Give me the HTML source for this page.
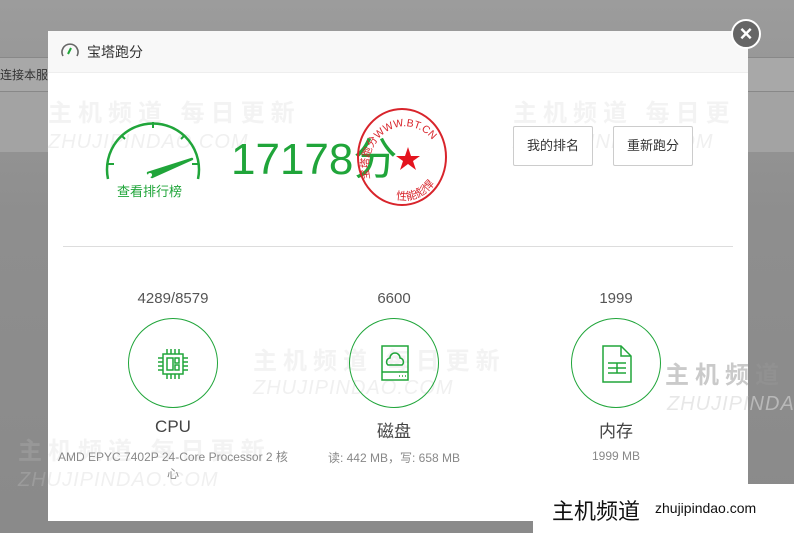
<!DOCTYPE html>
<html><head><meta charset="utf-8"><style>
*{margin:0;padding:0;box-sizing:border-box}
body{width:794px;height:533px;overflow:hidden;position:relative;font-family:"Liberation Sans","Noto Sans CJK SC",sans-serif;background:linear-gradient(#9c9c9c,#8e8e8e 40%,#8a8a8a);}
.abs{position:absolute}
.modal{left:48px;top:31px;width:700px;height:490px;background:#fff}
.hdr{left:0;top:0;width:700px;height:42px;background:#f8f8f8;border-bottom:1px solid #eee}
.btn{border:1px solid #ccc;border-radius:2px;width:80px;height:40px;font-size:13px;color:#333;text-align:center;line-height:38px;background:#fff}
.c{text-align:center;width:200px}
.circ{width:90px;height:90px;border:1.5px solid #20a53a;border-radius:50%}
.wm{color:rgba(200,200,200,.22);font-weight:bold;font-size:24px;letter-spacing:6px}
.wm2{color:rgba(200,200,200,.28);font-style:italic;font-size:20px;letter-spacing:1px}
</style></head><body>
<div class="abs" style="left:0;top:57px;width:48px;height:35px;background:#a8a8a8;border-top:1px solid #888;border-bottom:1px solid #888"></div>
<div class="abs" style="left:0;top:66px;font-size:12px;color:#333">连接本服</div>
<div class="abs" style="left:0;top:92px;width:48px;height:60px;background:#a3a3a3"></div>
<div class="abs" style="left:748px;top:57px;width:46px;height:35px;background:#a8a8a8;border-top:1px solid #888;border-bottom:1px solid #888"></div>
<div class="abs" style="left:748px;top:92px;width:46px;height:60px;background:#a3a3a3"></div>
<div class="abs modal">
 <div class="abs hdr"></div>
 <svg class="abs" style="left:11px;top:10px" width="22" height="18" viewBox="0 0 22 18"><path d="M4 15 A8 8 0 1 1 18 15" fill="none" stroke="#666" stroke-width="1.6"/><path d="M9 13 L12 7" stroke="#20a53a" stroke-width="2"/></svg>
 <div class="abs" style="left:39px;top:11px;font-size:14px;color:#333">宝塔跑分</div>
 <div class="abs wm" style="left:0;top:62px">主机频道 每日更新</div>
 <div class="abs wm2" style="left:0;top:100px">ZHUJIPINDAO.COM</div>
 <div class="abs wm" style="left:465px;top:62px">主机频道 每日更新</div>
 <div class="abs wm2" style="left:465px;top:100px">ZHUJIPINDAO.COM</div>
 <svg class="abs" style="left:56px;top:88px" width="98" height="64" viewBox="0 0 98 64"><path d="M4 60 A46 46 0 1 1 94 60" fill="none" stroke="#20a53a" stroke-width="2.5"/><path d="M49 3 V9 M17 16 L21 20 M81 16 L77 20 M4 45 H10 M94 45 H88" stroke="#20a53a" stroke-width="2"/><path d="M44 54 L88 40 L48 58 Z" fill="#20a53a" stroke="#20a53a" stroke-width="2.5" stroke-linejoin="round"/><circle cx="46" cy="56" r="2" fill="#fff"/></svg>
 <div class="abs" style="left:69px;top:150px;font-size:13px;color:#20a53a">查看排行榜</div>
 <div class="abs" style="left:183px;top:92px;font-size:44px;color:#20a53a">17178分</div>
 <svg class="abs" style="left:308px;top:76px" width="92" height="100" viewBox="0 0 92 100"><defs><path id="tp" d="M14 72 A36 40 0 1 1 84 48"/><path id="bp" d="M40 92 A38 42 0 0 0 86 58"/></defs><ellipse cx="46" cy="50" rx="44" ry="48" fill="none" stroke="#d8242b" stroke-width="2"/><path d="M52 40 L55 49 L64 49 L57 54 L60 63 L52 57 L44 63 L47 54 L40 49 L49 49 Z" fill="#e4141e"/><text font-size="10.5" fill="#d8242b"><textPath href="#tp">宝塔跑分WWW.BT.CN</textPath></text><text font-size="11" fill="#d8242b"><textPath href="#bp">性能彪悍</textPath></text></svg>
 <div class="abs btn" style="left:465px;top:95px">我的排名</div>
 <div class="abs btn" style="left:565px;top:95px">重新跑分</div>
 <div class="abs" style="left:15px;top:215px;width:670px;height:1px;background:#ddd"></div>
 <div class="abs wm" style="left:205px;top:310px">主机频道 每日更新</div>
 <div class="abs wm2" style="left:205px;top:346px">ZHUJIPINDAO.COM</div>
 <div class="abs wm" style="left:-30px;top:400px">主机频道 每日更新</div>
 <div class="abs wm2" style="left:-30px;top:438px">ZHUJIPINDAO.COM</div>
 <div class="abs c" style="left:25px;top:259px;font-size:15px;color:#555">4289/8579</div>
 <div class="abs circ" style="left:80px;top:287px"></div>
 <svg class="abs" style="left:107px;top:315px" width="36" height="36" viewBox="0 0 36 36" fill="none" stroke="#20a53a" stroke-width="1.5"><rect x="8" y="8" width="20" height="20"/><rect x="12" y="12" width="6" height="12"/><rect x="20" y="12" width="4" height="5"/><rect x="20" y="19" width="4" height="5"/><path d="M12 3v5M16 3v5M20 3v5M24 3v5M12 28v5M16 28v5M20 28v5M24 28v5M3 12h5M3 16h5M3 20h5M3 24h5M28 12h5M28 16h5M28 20h5M28 24h5"/></svg>
 <div class="abs c" style="left:25px;top:386px;font-size:17px;color:#444">CPU</div>
 <div class="abs c" style="left:5px;top:418px;width:240px;font-size:12px;color:#888;line-height:17px">AMD EPYC 7402P 24-Core Processor 2 核心</div>
 <div class="abs c" style="left:246px;top:259px;font-size:15px;color:#555">6600</div>
 <div class="abs circ" style="left:301px;top:287px"></div>
 <svg class="abs" style="left:329px;top:312px" width="36" height="42" viewBox="0 0 36 42" fill="none" stroke="#20a53a" stroke-width="1.5"><rect x="5" y="3" width="26" height="34"/><path d="M5 29h26"/><path d="M11 22 a4 4 0 0 1 2-7 a5 5 0 0 1 10 0 a4 4 0 0 1 2 7 Z"/><path d="M22 33h1M25 33h1M28 33h1"/></svg>
 <div class="abs c" style="left:246px;top:386px;font-size:17px;color:#444">磁盘</div>
 <div class="abs c" style="left:246px;top:418px;font-size:12px;color:#888">读: 442 MB，写: 658 MB</div>
 <div class="abs c" style="left:468px;top:259px;font-size:15px;color:#555">1999</div>
 <div class="abs circ" style="left:523px;top:287px"></div>
 <svg class="abs" style="left:551px;top:312px" width="36" height="42" viewBox="0 0 36 42" fill="none" stroke="#20a53a" stroke-width="1.5"><path d="M4 3h18l10 10v26H4Z"/><path d="M22 3v10h10"/><path d="M9 20h18M9 25h18M9 30h18M18 20v10"/></svg>
 <div class="abs c" style="left:468px;top:386px;font-size:17px;color:#444">内存</div>
 <div class="abs c" style="left:468px;top:418px;font-size:12px;color:#888">1999 MB</div>
</div>
<div class="abs wm" style="left:665px;top:355px;color:rgba(150,150,150,.5)">主机频道</div>
<div class="abs wm2" style="left:667px;top:393px;color:rgba(215,215,215,.6)">ZHUJIPINDAO</div>
<div class="abs" style="left:731px;top:19px;width:30px;height:30px;border-radius:50%;background:#666;border:2px solid #fff;color:#fff;text-align:center;line-height:25px;font-size:22px;font-weight:bold">×</div>
<div class="abs" style="left:533px;top:484px;width:261px;height:49px;background:#fff"></div>
<div class="abs" style="left:552px;top:494px;font-size:22px;color:#111">主机频道</div>
<div class="abs" style="left:655px;top:500px;font-size:14px;color:#111">zhujipindao.com</div>
</body></html>
